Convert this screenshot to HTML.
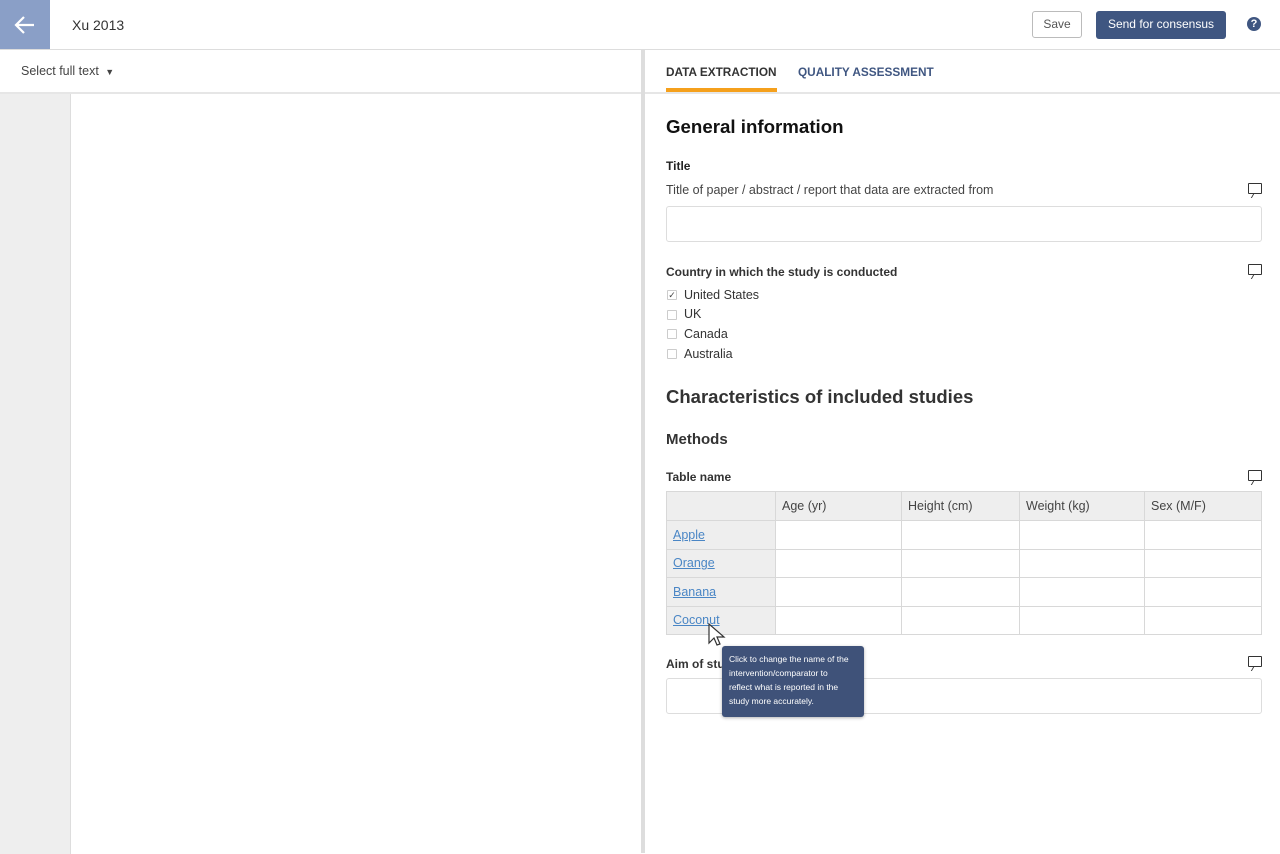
<!DOCTYPE html>
<html><head><style>
*{box-sizing:border-box;margin:0;padding:0}
body{width:1280px;height:853px;overflow:hidden;font-family:"Liberation Sans",Arial,sans-serif;background:#fff;color:#222;position:relative}
.abs{position:absolute}
.icon{position:absolute;width:14px;height:11px;border:1.5px solid #333;border-radius:1px}
.icon:after{content:"";position:absolute;left:3px;bottom:-5px;border-left:1.5px solid #333;height:4px;transform:skewX(-30deg)}
.cb{position:absolute;left:667px;width:10px;height:10px;border:1px solid #ccc;border-radius:1px}
.cl{position:absolute;left:684px;font-size:12.5px;color:#333}
table{position:absolute;left:666px;top:491px;width:596px;border-collapse:collapse;font-size:12.5px}
td{border:1px solid #d8d8d8;height:28.5px;padding:0 6px;color:#444}
tr:first-child td{background:#eee;height:29px}
td.f{background:#eee;width:109px}
td.f a{color:#4a86c5;text-decoration:underline}
</style></head><body>
<div class="abs" style="left:0;top:0;width:50px;height:49px;background:#8a9fc7"></div>
<svg class="abs" style="left:13px;top:14px" width="24" height="22" viewBox="0 0 24 22"><path d="M21 11H4M11 3L3 11l8 8" stroke="#fff" stroke-width="2.2" fill="none"/></svg>
<div class="abs" style="left:72px;top:17px;font-size:14px;color:#333">Xu 2013</div>
<div class="abs" style="left:1032px;top:11px;width:50px;height:27px;border:1px solid #bbb;border-radius:3px;font-size:12px;color:#555;text-align:center;line-height:25px">Save</div>
<div class="abs" style="left:1096px;top:11px;width:130px;height:28px;background:#3f5681;border-radius:3px;font-size:12px;color:#fff;text-align:center;line-height:27px">Send for consensus</div>
<div class="abs" style="left:1247px;top:17px;width:14px;height:14px;border-radius:50%;background:#3f5681;color:#fff;font-size:11px;font-weight:bold;text-align:center;line-height:14px">?</div>
<div class="abs" style="left:0;top:49px;width:1280px;height:1px;background:#ddd"></div>
<div class="abs" style="left:21px;top:64px;font-size:12.5px;color:#444">Select full text <span style="font-size:9px;margin-left:3px">▼</span></div>
<div class="abs" style="left:0;top:92px;width:1280px;height:2px;background:#e6e6e6"></div>
<div class="abs" style="left:0;top:94px;width:71px;height:760px;background:#eee;border-right:1px solid #ddd"></div>
<div class="abs" style="left:641px;top:50px;width:4px;height:803px;background:#ddd"></div>
<div class="abs" style="left:666px;top:65px;font-size:11.8px;font-weight:bold;color:#333">DATA EXTRACTION</div>
<div class="abs" style="left:798px;top:65px;font-size:11.8px;font-weight:bold;color:#3f5681">QUALITY ASSESSMENT</div>
<div class="abs" style="left:666px;top:88px;width:111px;height:4px;background:#f5a01c"></div>
<div class="abs" style="left:666px;top:116px;font-size:18.7px;font-weight:bold;color:#111">General information</div>
<div class="abs" style="left:666px;top:159px;font-size:12px;font-weight:bold;color:#222">Title</div>
<div class="abs" style="left:666px;top:183px;font-size:12.5px;color:#444">Title of paper / abstract / report that data are extracted from</div>
<div class="icon" style="left:1248px;top:183px"></div>
<div class="abs" style="left:666px;top:206px;width:596px;height:36px;border:1px solid #ddd;border-radius:3px"></div>
<div class="abs" style="left:666px;top:265px;font-size:12px;font-weight:bold;color:#333">Country in which the study is conducted</div>
<div class="icon" style="left:1248px;top:264px"></div>
<div class="cb" style="top:290px;font-size:9px;line-height:8px;text-align:center;color:#444">✓</div><div class="cl" style="top:288px">United States</div>
<div class="cb" style="top:310px"></div><div class="cl" style="top:307px">UK</div>
<div class="cb" style="top:329px"></div><div class="cl" style="top:327px">Canada</div>
<div class="cb" style="top:349px"></div><div class="cl" style="top:347px">Australia</div>
<div class="abs" style="left:666px;top:386px;font-size:18.5px;font-weight:bold;color:#333">Characteristics of included studies</div>
<div class="abs" style="left:666px;top:431px;font-size:15px;font-weight:bold;color:#333">Methods</div>
<div class="abs" style="left:666px;top:470px;font-size:12px;font-weight:bold;color:#333">Table name</div>
<div class="icon" style="left:1248px;top:470px"></div>
<table>
<tr><td class="f"></td><td style="width:126px">Age (yr)</td><td style="width:118px">Height (cm)</td><td style="width:125px">Weight (kg)</td><td>Sex (M/F)</td></tr>
<tr><td class="f"><a>Apple</a></td><td></td><td></td><td></td><td></td></tr>
<tr><td class="f"><a>Orange</a></td><td></td><td></td><td></td><td></td></tr>
<tr><td class="f"><a>Banana</a></td><td></td><td></td><td></td><td></td></tr>
<tr><td class="f"><a>Coconut</a></td><td></td><td></td><td></td><td></td></tr>
</table>
<div class="abs" style="left:666px;top:657px;font-size:12px;font-weight:bold;color:#333">Aim of study</div>
<div class="icon" style="left:1248px;top:656px"></div>
<div class="abs" style="left:666px;top:678px;width:596px;height:36px;border:1px solid #ddd;border-radius:3px"></div>
<div class="abs" style="left:722px;top:646px;width:142px;height:71px;background:#3f5279;border-radius:3px;color:#fff;font-size:8.5px;line-height:14px;padding:6px 14px 6px 7px;box-shadow:0 1px 3px rgba(0,0,0,.3)">Click to change the name of the intervention/comparator to reflect what is reported in the study more accurately.</div>
<svg class="abs" style="left:707px;top:623px" width="20" height="26" viewBox="0 0 20 26"><path d="M2 1v19l5-5 3 7 3-1-3-7h7z" fill="#fff" stroke="#333" stroke-width="1.2"/></svg>
</body></html>
